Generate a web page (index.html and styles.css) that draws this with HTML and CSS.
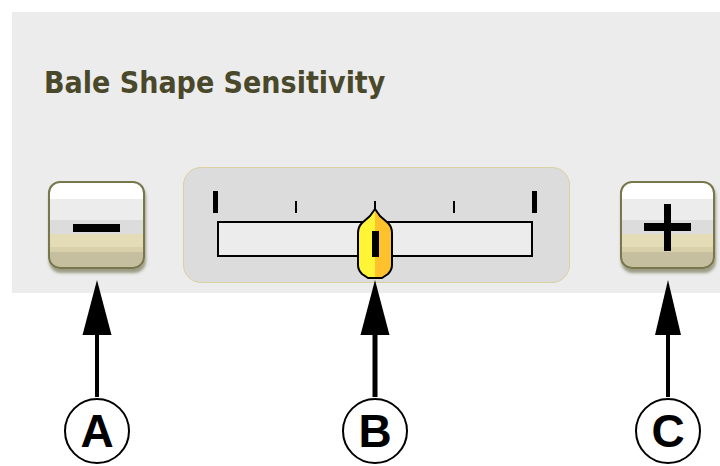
FILE: index.html
```html
<!DOCTYPE html>
<html lang="en">
<head>
  <meta charset="UTF-8">
  <meta name="viewport" content="width=device-width, initial-scale=1.0">
  <link rel="stylesheet" href="styles.css">
</head>
<body>

<div class="panel">
  <h3 class="title">Bale Shape Sensitivity</h3>

  <div class="controls">
    <button class="step-btn step-minus" type="button">
      <svg width="47" height="47" viewBox="0 0 47 47">
        <rect x="0" y="20" width="47" height="8" fill="#000"/>
      </svg>
    </button>

    <div class="slider">
      <div class="ticks">
        <span class="tick tick-big"></span>
        <span class="tick"></span>
        <span class="tick"></span>
        <span class="tick"></span>
        <span class="tick tick-big"></span>
      </div>
      <div class="track"></div>
      <svg class="thumb" width="38" height="72" viewBox="0 0 38 72">
        <defs>
          <linearGradient id="thumbFill" x1="0" y1="0" x2="1" y2="0">
            <stop offset="0" stop-color="#fff436"/>
            <stop offset="0.5" stop-color="#fff436"/>
            <stop offset="0.5" stop-color="#ffc22c"/>
            <stop offset="1" stop-color="#ffc22c"/>
          </linearGradient>
        </defs>
        <path d="M19 1 L24 8 L32 15 Q36 19 36 25 L36 57 Q36 62 32 66 L26 70 L12 70 L6 66 Q2 62 2 57 L2 25 Q2 19 6 15 L14 8 Z"
              fill="url(#thumbFill)" stroke="#000" stroke-width="2" stroke-linejoin="round"/>
        <rect x="16" y="23" width="7" height="26" fill="#000"/>
      </svg>
    </div>

    <button class="step-btn step-plus" type="button">
      <svg width="47" height="47" viewBox="0 0 47 47">
        <rect x="0" y="19" width="47" height="8" fill="#000"/>
        <rect x="20" y="0" width="7" height="47" fill="#000"/>
      </svg>
    </button>
  </div>
</div>

<div class="callouts">
  <div class="callout callout-a">
    <svg class="arrow" width="30" height="117" viewBox="0 0 30 117">
      <polygon points="15,0 29.5,55 0.5,55" fill="#000"/>
      <rect x="13" y="54" width="4" height="63" fill="#000"/>
    </svg>
    <div class="badge">A</div>
  </div>
  <div class="callout callout-b">
    <svg class="arrow" width="30" height="117" viewBox="0 0 30 117">
      <polygon points="15,0 29.5,55 0.5,55" fill="#000"/>
      <rect x="12.5" y="54" width="5" height="63" fill="#000"/>
    </svg>
    <div class="badge">B</div>
  </div>
  <div class="callout callout-c">
    <svg class="arrow" width="30" height="117" viewBox="0 0 30 117">
      <polygon points="15,0 28,55 2,55" fill="#000"/>
      <rect x="13" y="54" width="4" height="63" fill="#000"/>
    </svg>
    <div class="badge">C</div>
  </div>
</div>

</body>
</html>
```

FILE: styles.css
```css
body {
  margin: 0;
  background: #fff;
  font-family: "DejaVu Sans", sans-serif;
}

.panel {
  margin: 12px 0 0 12px;
  height: 281px;
  background-color: #ececec;
  padding-left: 32px;
}

.title {
  margin: 0;
  padding-top: 56px;
  font-family: "DejaVu Sans Condensed", "DejaVu Sans", sans-serif;
  font-stretch: condensed;
  font-size: 30px;
  line-height: 30px;
  font-weight: bold;
  letter-spacing: 0;
  color: #4a482a;
}

.controls {
  display: flex;
  align-items: center;
  margin-top: 69px;
  padding-left: 4px;
}

/* - and + buttons */
.step-btn {
  box-sizing: border-box;
  width: 97px;
  height: 88px;
  padding: 4px 0 0 0;
  border: 2px solid #77774b;
  border-radius: 12px;
  display: flex;
  align-items: center;
  justify-content: center;
  background: linear-gradient(to bottom,
    #ffffff 0, #ffffff 16px,
    #ececec 16px, #ececec 37px,
    #dcdcdc 37px, #dcdcdc 51px,
    #e4dcb6 51px, #e4dcb6 64px,
    #d8d0aa 64px, #d8d0aa 69px,
    #c6bf9f 69px, #c6bf9f 100%);
  box-shadow: 1px 4px 3px rgba(90, 90, 50, 0.55);
  cursor: pointer;
}

.step-plus {
  width: 95px;
  margin-left: 50px;
}

.slider {
  position: relative;
  box-sizing: border-box;
  width: 387px;
  height: 116px;
  margin-left: 38px;
  border: 1px solid #d9d1a2;
  border-radius: 18px;
  background-color: #dcdcdc;
}

.ticks {
  display: flex;
  justify-content: space-between;
  align-items: flex-end;
  margin: 23px 0 0 29px;
  width: 324px;
  height: 22px;
}

.tick {
  width: 2px;
  height: 12px;
  background: #000;
}

.tick-big {
  width: 5px;
  height: 22px;
}

.track {
  box-sizing: border-box;
  margin: 8px 0 0 33px;
  width: 316px;
  height: 36px;
  border: 2px solid #000;
  background-color: #ececec;
}

.thumb {
  position: absolute;
  left: 172px;
  top: 40px;
}

/* labels under the panel */
.callouts {
  position: relative;
  display: flex;
  margin-top: -13px;
  padding-left: 64px;
}

.callout {
  width: 66px;
  display: flex;
  flex-direction: column;
  align-items: center;
}

.callout-b {
  margin-left: 212px;
}

.callout-c {
  margin-left: 227px;
}

.arrow {
  display: block;
}

.badge {
  box-sizing: border-box;
  width: 66px;
  height: 66px;
  margin-top: 1px;
  border: 2px solid #000;
  border-radius: 50%;
  display: flex;
  align-items: center;
  justify-content: center;
  font-family: "Liberation Sans", Arial, sans-serif;
  font-weight: bold;
  font-size: 46px;
  line-height: 1;
  color: #000;
}
```
